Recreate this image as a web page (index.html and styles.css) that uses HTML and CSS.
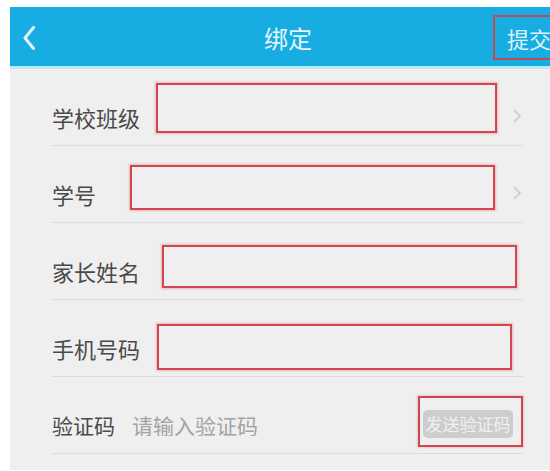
FILE: index.html
```html
<!DOCTYPE html>
<html lang="zh-CN">
<head>
  <meta charset="UTF-8" />
  <meta name="viewport" content="width=device-width, initial-scale=1" />
  <title>绑定</title>
  <link rel="stylesheet" href="styles.css">
</head>
<body>
  <div class="screen">
    <header class="topbar">
      <a class="back" href="#">
        <svg width="12" height="24" viewBox="0 0 12 24">
          <polyline points="10.5,1.5 2,12 10.5,22.5" fill="none" stroke="#e2f4fb" stroke-width="3" stroke-linecap="round" stroke-linejoin="round" />
        </svg>
      </a>
      <h1>绑定</h1>
      <button class="submit" type="submit" form="bind-form">提交</button>
    </header>

    <form id="bind-form" class="list">
      <div class="row">
        <label class="label">学校班级</label>
        <input class="field field-school" type="text" />
        <span class="arrow">
          <svg width="10" height="16" viewBox="0 0 10 16"><polyline points="2,2 8,8 2,14" fill="none" stroke="#c9c9c9" stroke-width="1.5" /></svg>
        </span>
      </div>
      <div class="row">
        <label class="label">学号</label>
        <input class="field field-number" type="text" />
        <span class="arrow">
          <svg width="10" height="16" viewBox="0 0 10 16"><polyline points="2,2 8,8 2,14" fill="none" stroke="#c9c9c9" stroke-width="1.5" /></svg>
        </span>
      </div>
      <div class="row">
        <label class="label">家长姓名</label>
        <input class="field field-parent" type="text" />
      </div>
      <div class="row">
        <label class="label">手机号码</label>
        <input class="field field-phone" type="tel" />
      </div>
      <div class="row">
        <label class="label label-code">验证码</label>
        <input class="code-input" type="text" placeholder="请输入验证码" />
        <div class="send-box">
          <button class="send" type="button">发送验证码</button>
        </div>
      </div>
    </form>
  </div>
</body>
</html>
```

FILE: styles.css
```css
* {
  box-sizing: border-box;
}
html, body {
  height: 100%;
}
body {
  margin: 0;
  padding: 7px 0 0 10px;
  background: #ffffff;
  font-family: "Noto Sans CJK SC", "Noto Sans", sans-serif;
  overflow: hidden;
}
.screen {
  width: 540px;
  height: 463px;
  background: #efefef;
}
.topbar {
  height: 62px;
  padding-top: 2px;
  background: #17ade3;
  border-bottom: 3px solid #bfe9f8;
  display: flex;
  align-items: center;
  overflow: hidden;
}
.back {
  width: 73px;
  padding-left: 13px;
  display: flex;
  align-items: center;
  flex-shrink: 0;
}
.topbar h1 {
  flex: 1;
  margin: 0;
  text-align: center;
  font-size: 24px;
  font-weight: 400;
  color: #e4f5fc;
  line-height: 1;
}
.submit {
  flex-shrink: 0;
  width: 76px;
  height: 45px;
  margin-right: -19px;
  padding: 0 0 0 12px;
  text-align: left;
  background: transparent;
  border: 2px solid #c24a56;
  font-family: inherit;
  font-size: 22px;
  color: #dff2fa;
  line-height: 1;
}
.list {
  margin: 0;
  padding: 0 27px 0 42px;
}
.row {
  height: 77px;
  border-bottom: 1px solid #dddddd;
  display: flex;
  align-items: center;
}
.label {
  margin-top: 20px;
  font-size: 22px;
  line-height: 22px;
  color: #4a4a4a;
  white-space: nowrap;
}
.label-code {
  font-size: 21px;
}
.field {
  flex-shrink: 0;
  background: transparent;
  border: 2px solid #d2474f;
  box-shadow: 0 0 2px 1px rgba(230, 120, 120, 0.45);
  outline: none;
}
.field-school {
  width: 341px;
  height: 50px;
  margin: 2px 0 0 16px;
}
.field-number {
  width: 365px;
  height: 45px;
  margin: 6px 0 0 34px;
}
.field-parent {
  width: 355px;
  height: 43px;
  margin: 10px 0 0 22px;
}
.field-phone {
  width: 355px;
  height: 46px;
  margin: 18px 0 0 17px;
}
.arrow {
  margin: 18px 1px 0 auto;
  display: flex;
}
.code-input {
  flex: 1;
  min-width: 0;
  margin: 20px 0 0 17px;
  padding: 0;
  border: none;
  background: transparent;
  font-family: inherit;
  font-size: 21px;
  line-height: 22px;
  color: #4a4a4a;
  outline: none;
}
.code-input::placeholder {
  color: #a3a3a3;
}
.send-box {
  flex-shrink: 0;
  width: 105px;
  height: 51px;
  margin-top: 12px;
  padding: 12px 8px 7px 3px;
  border: 2px solid #cc4650;
  box-shadow: 0 0 2px 1px rgba(230, 120, 120, 0.35);
}
.send {
  width: 100%;
  height: 100%;
  padding: 0;
  border: none;
  border-radius: 5px;
  background: #cdcdcd;
  font-family: inherit;
  font-size: 17px;
  color: #f1f1f1;
  line-height: 1;
  white-space: nowrap;
}
```
